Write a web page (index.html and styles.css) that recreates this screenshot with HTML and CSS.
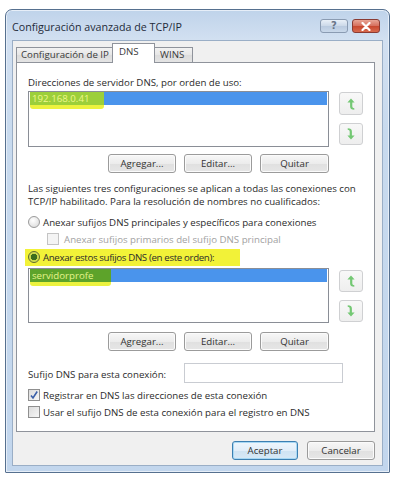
FILE: index.html
```html
<!DOCTYPE html>
<html lang="es">
<head>
<meta charset="utf-8">
<title>Configuración avanzada de TCP/IP</title>
<link rel="stylesheet" href="styles.css">
</head>
<body>
<div class="window">
  <div class="titlebar">
    <span class="title">Configuración avanzada de TCP/IP</span>
    <div class="caption">
      <span class="cbtn help">?</span>
      <span class="cbtn close"><svg width="10" height="9" viewBox="0 0 10 9"><path d="M1.5 1 L8.5 8 M8.5 1 L1.5 8" stroke="#fff" stroke-width="2.2" stroke-linecap="round"/></svg></span>
    </div>
  </div>
  <div class="client">
    <div class="tabs">
      <div class="tab">Configuración de IP</div>
      <div class="tab active">DNS</div>
      <div class="tab">WINS</div>
    </div>
    <div class="panel">
      <div class="label">Direcciones de servidor DNS, por orden de uso:</div>
      <div class="listrow">
        <div class="listbox"><div class="item"><span class="mark m1">192.168.0.41</span></div></div>
        <div class="arrows">
          <div class="abtn up"><svg width="12" height="14" viewBox="0 0 12 14"><path d="M6 1.5 L9.6 5.6 L7.3 5.6 L7.3 9.6 Q7.3 11.2 9.3 11.2 L9.3 12.8 Q5.1 12.8 5.1 9.6 L5.1 5.6 L2.4 5.6 Z" fill="#74c874"/></svg></div>
          <div class="abtn down"><svg width="12" height="14" viewBox="0 0 12 14"><path d="M6 1.5 L9.6 5.6 L7.3 5.6 L7.3 9.6 Q7.3 11.2 9.3 11.2 L9.3 12.8 Q5.1 12.8 5.1 9.6 L5.1 5.6 L2.4 5.6 Z" fill="#74c874" transform="rotate(180 6 7)"/></svg></div>
        </div>
      </div>
      <div class="btnrow">
        <span class="btn">Agregar...</span>
        <span class="btn">Editar...</span>
        <span class="btn w69">Quitar</span>
      </div>
      <p class="desc">Las siguientes tres configuraciones se aplican a todas las conexiones con<br>TCP/IP habilitado. Para la resolución de nombres no cualificados:</p>
      <div class="opt r1"><span class="radio"></span><span>Anexar sufijos DNS principales y específicos para conexiones</span></div>
      <div class="opt c1 disabled"><span class="check off"></span><span>Anexar sufijos primarios del sufijo DNS principal</span></div>
      <div class="opt r2"><span class="hl"><span class="radio on"></span><span class="tight">Anexar estos sufijos DNS (en este orden):</span></span></div>
      <div class="listrow l2">
        <div class="listbox lb2"><div class="item"><span class="mark m2">servidorprofe</span></div></div>
        <div class="arrows a2">
          <div class="abtn up"><svg width="12" height="14" viewBox="0 0 12 14"><path d="M6 1.5 L9.6 5.6 L7.3 5.6 L7.3 9.6 Q7.3 11.2 9.3 11.2 L9.3 12.8 Q5.1 12.8 5.1 9.6 L5.1 5.6 L2.4 5.6 Z" fill="#74c874"/></svg></div>
          <div class="abtn down"><svg width="12" height="14" viewBox="0 0 12 14"><path d="M6 1.5 L9.6 5.6 L7.3 5.6 L7.3 9.6 Q7.3 11.2 9.3 11.2 L9.3 12.8 Q5.1 12.8 5.1 9.6 L5.1 5.6 L2.4 5.6 Z" fill="#74c874" transform="rotate(180 6 7)"/></svg></div>
        </div>
      </div>
      <div class="btnrow b2">
        <span class="btn">Agregar...</span>
        <span class="btn">Editar...</span>
        <span class="btn w69">Quitar</span>
      </div>
      <div class="suffix">
        <span class="slabel">Sufijo DNS para esta conexión:</span>
        <span class="field"></span>
      </div>
      <div class="opt k1"><span class="check"><svg width="10" height="10" viewBox="0 0 10 10"><path d="M2 5.5 L4 8 L8.2 1.5" fill="none" stroke="#3a5fa8" stroke-width="1.6"/></svg></span><span>Registrar en DNS las direcciones de esta conexión</span></div>
      <div class="opt k2"><span class="check"></span><span>Usar el sufijo DNS de esta conexión para el registro en DNS</span></div>
    </div>
    <div class="footer">
      <span class="btn default">Aceptar</span>
      <span class="btn">Cancelar</span>
    </div>
  </div>
</div>
</body>
</html>
```
FILE: styles.css
```css
* { box-sizing: border-box; }
html, body { margin: 0; padding: 0; background: #ffffff; }
body {
  font-family: "Open Sans", "Noto Sans", sans-serif;
  font-size: 9.7px;
  color: #2b2b2b;
  width: 400px;
  height: 482px;
  overflow: hidden;
}
.window {
  margin: 9px 0 0 5px;
  width: 385px;
  height: 464px;
  border: 1px solid #56708f;
  border-radius: 7px 7px 1px 1px;
  background: linear-gradient(180deg, #bfd3ea 0px, #d2e0f1 30px, #c8daee 120px, #c2d6ed 100%);
  padding: 0 6px 6px 6px;
  display: flex;
  flex-direction: column;
  box-shadow: inset 0 0 0 1px #e6eef8;
}
.titlebar {
  height: 30px;
  display: flex;
  align-items: flex-start;
  justify-content: space-between;
}
.title {
  margin-top: 9px;
  font-size: 10.7px;
  line-height: 16px;
  color: #1f2b3a;
}
.caption {
  display: flex;
  gap: 4px;
  margin-top: 9px;
  margin-right: 3px;
}
.cbtn {
  width: 28px;
  height: 14px;
  border-radius: 3px;
  display: flex;
  align-items: center;
  justify-content: center;
}
.help {
  border: 1px solid #8a9bb2;
  background: linear-gradient(180deg, #e9f0f8, #cbd8e8 50%, #b9cadf 51%, #c9d8ea);
  color: #6a7588;
  font-family: "DejaVu Sans", sans-serif;
  font-size: 10px;
  font-weight: bold;
  line-height: 1;
}
.close {
  border: 1px solid #8a3b33;
  background: linear-gradient(180deg, #e8a595, #d56e5c 50%, #c7472f 51%, #d86a4e);
}
.client {
  flex: 1;
  background: #f0f0f0;
  border: 1px solid #9aaec6;
  padding: 2px 7px 0 3px;
  display: flex;
  flex-direction: column;
}
.tabs {
  display: flex;
  height: 19px;
  align-items: flex-end;
  position: relative;
  z-index: 1;
}
.tab {
  height: 15px;
  border: 1px solid #8f939b;
  border-bottom: none;
  background: linear-gradient(180deg, #f2f2f2, #e6e6e6 50%, #dcdcdc 51%, #e4e4e4);
  padding: 0 4px;
  line-height: 14px;
  color: #3a3a3a;
  white-space: nowrap;
}
.tab:first-child { width: 97px; }
.tab + .tab { margin-left: -1px; }
.tab.active {
  height: 20px;
  margin-bottom: -1px;
  background: #ffffff;
  width: 43px;
  line-height: 16px;
  padding-left: 6px;
}
.tab:last-child { width: 39px; padding-left: 5px; }
.panel {
  height: 370px;
  border: 1px solid #8f939b;
  background: #ffffff;
  padding: 13px 0 0 11px;
}
.label { height: 15px; line-height: 14px; }
.listrow { display: flex; }
.listbox {
  width: 301px;
  height: 56px;
  border: 1px solid #8a8e96;
  background: #fff;
  padding: 0 1px;
}
.lb2 { height: 55px; }
.item {
  height: 13px;
  background: #4a94ec;
  line-height: 13px;
  color: #fff;
}
.mark {
  position: relative;
  display: inline-block;
  height: 13px;
  padding: 0 2px;
}
.mark::after {
  content: "";
  position: absolute;
  left: 0;
  right: 0;
  top: 100%;
  height: 4px;
  background: #ecf23e;
  border-radius: 0 0 3px 3px;
}
.m1 { width: 74px; background: #9ccf3a; color: #eef78a; }
.m2 { width: 81px; background: #5da32a; color: #e6f48a; }
.arrows {
  margin-left: 10px;
  display: flex;
  flex-direction: column;
}
.abtn {
  width: 24px;
  border: 1px solid #cfd0d2;
  border-radius: 3px;
  background: linear-gradient(180deg, #f8f8f8, #eeeeee);
  display: flex;
  align-items: center;
  justify-content: center;
}
.arrows .up { margin-top: 1px; height: 23px; }
.arrows .down { margin-top: 8px; height: 22px; }
.a2 .up { margin-top: 2px; height: 22px; }
.a2 .down { margin-top: 8px; height: 22px; }
.btnrow {
  width: 301px;
  margin-top: 7px;
  display: flex;
  justify-content: flex-end;
  gap: 8px;
}
.b2 { margin-top: 9px; }
.btn {
  width: 68px;
  height: 19px;
  border: 1px solid #9b9b9b;
  border-radius: 3px;
  background: linear-gradient(180deg, #f7f7f7, #ececec 50%, #e0e0e0 51%, #e6e6e6);
  display: flex;
  align-items: center;
  justify-content: center;
  color: #333;
  box-shadow: inset 0 0 0 1px #fbfbfb;
}
.w69 { width: 69px; }
.desc {
  margin: 9px 0 0 0;
  line-height: 13px;
}
.opt {
  display: flex;
  align-items: center;
  height: 14px;
  gap: 3px;
}
.r1 { margin-top: 7px; }
.c1 { margin-top: 3px; padding-left: 19px; gap: 5px; }
.r2 { margin-top: 4px; }
.disabled { color: #a2a2a2; }
.hl {
  display: flex;
  align-items: center;
  gap: 3px;
  background: #f2f238;
  margin-left: -3px;
  padding-left: 3px;
  width: 215px;
  height: 17px;
  white-space: nowrap;
}
.tight { letter-spacing: -0.35px; }
.radio {
  width: 12px;
  height: 12px;
  border-radius: 50%;
  border: 1px solid #9a9a9a;
  background: radial-gradient(circle at 40% 35%, #ffffff, #d6d6d6);
  flex: none;
}
.radio.on {
  border-color: #5e6a30;
  background: radial-gradient(circle, #3d6d1e 0 3px, #c9d64a 3.5px, #e6ec6a);
}
.check {
  width: 12px;
  height: 12px;
  border: 1px solid #8f8f8f;
  background: linear-gradient(135deg, #dcdcdc, #f6f6f6);
  flex: none;
  display: flex;
  align-items: center;
  justify-content: center;
}
.check.off { border-color: #c4c4c4; background: #f4f4f4; }
.l2 { margin-top: 4px; }
.suffix {
  margin-top: 12px;
  display: flex;
  align-items: center;
  height: 20px;
}
.slabel { width: 156px; padding-top: 3px; }
.field {
  width: 159px;
  height: 20px;
  border: 1px solid #c9ccd2;
  background: #fff;
}
.k1 { margin-top: 5px; }
.k2 { margin-top: 3px; }
.footer {
  margin-top: 9px;
  display: flex;
  justify-content: flex-end;
  gap: 9px;
}
.footer .btn { width: 68px; }
.footer .default {
  width: 66px;
  border-color: #3c7fb1;
  box-shadow: inset 0 0 0 1px #a8d8f4;
  background: linear-gradient(180deg, #eef6fc, #e2eef9 50%, #cfe3f3 51%, #d8e9f6);
}
```
